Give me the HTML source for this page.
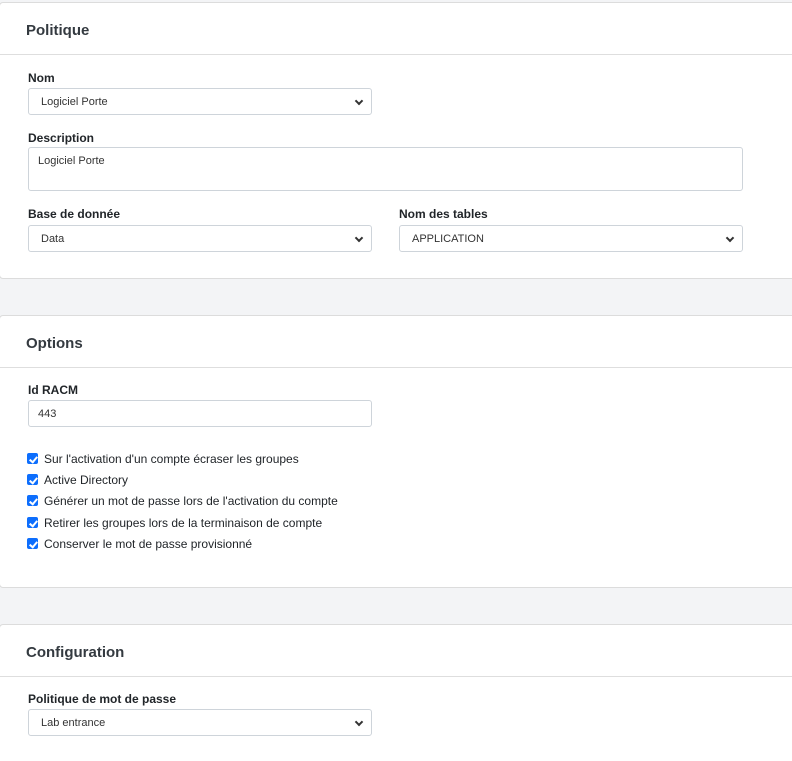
<!DOCTYPE html>
<html><head><meta charset="utf-8"><style>
*{box-sizing:border-box}
html,body{margin:0;width:792px;height:761px;overflow:hidden}
body{background:#f3f4f6;font-family:"Liberation Sans",sans-serif;color:#212529;position:relative}
.card{position:absolute;left:-1px;width:800px;background:#fff;border:1px solid #dcdcdc;border-radius:4px}
.hd{height:52px;border-bottom:1px solid #dedede;padding:0 0 0 26px;font-size:15px;font-weight:bold;color:#343a40;line-height:56px}
.el{position:absolute}
.lbl{font-size:12px;font-weight:bold;color:#212529}
.inp{border:1px solid #ced4da;border-radius:3px;background:#fff;font-size:11px;color:#333;padding-left:12px;height:27px;line-height:26px}
.sel::after{content:"";position:absolute;right:9px;top:9px;width:4px;height:4px;border-right:2px solid #333;border-bottom:2px solid #333;transform:rotate(45deg)}
.cb{position:absolute;left:27px;font-size:12px;color:#212529;height:16px;line-height:16px;padding-left:17px}
.cb::before{content:"";position:absolute;left:0;top:2px;width:11px;height:11px;background:#0d6efd;border-radius:2px}
.cb::after{content:"";position:absolute;left:3.5px;top:3.5px;width:3px;height:6px;border-right:2px solid #fff;border-bottom:2px solid #fff;transform:rotate(40deg)}
</style></head><body>
<div class="card" style="top:2px;height:277px">
<div class="hd">Politique</div>
<div class="el lbl" style="left:28px;top:68px">Nom</div>
<div class="el inp sel" style="left:28px;top:85px;width:344px">Logiciel Porte</div>
<div class="el lbl" style="left:28px;top:128px">Description</div>
<div class="el inp" style="left:28px;top:144px;width:715px;height:44px;line-height:16px;padding-top:5px;padding-left:9px">Logiciel Porte</div>
<div class="el lbl" style="left:28px;top:204px">Base de donnée</div>
<div class="el inp sel" style="left:28px;top:222px;width:344px">Data</div>
<div class="el lbl" style="left:399px;top:204px">Nom des tables</div>
<div class="el inp sel" style="left:399px;top:222px;width:344px">APPLICATION</div>
</div>
<div class="card" style="top:315px;height:273px">
<div class="hd">Options</div>
<div class="el lbl" style="left:28px;top:67px">Id RACM</div>
<div class="el inp" style="left:28px;top:84px;width:344px;padding-left:9px">443</div>
<div class="cb" style="top:135px">Sur l'activation d'un compte écraser les groupes</div>
<div class="cb" style="top:156px">Active Directory</div>
<div class="cb" style="top:177px">Générer un mot de passe lors de l'activation du compte</div>
<div class="cb" style="top:199px">Retirer les groupes lors de la terminaison de compte</div>
<div class="cb" style="top:220px">Conserver le mot de passe provisionné</div>
</div>
<div class="card" style="top:624px;height:160px">
<div class="hd">Configuration</div>
<div class="el lbl" style="left:28px;top:67px">Politique de mot de passe</div>
<div class="el inp sel" style="left:28px;top:84px;width:344px">Lab entrance</div>
</div>
</body></html>
